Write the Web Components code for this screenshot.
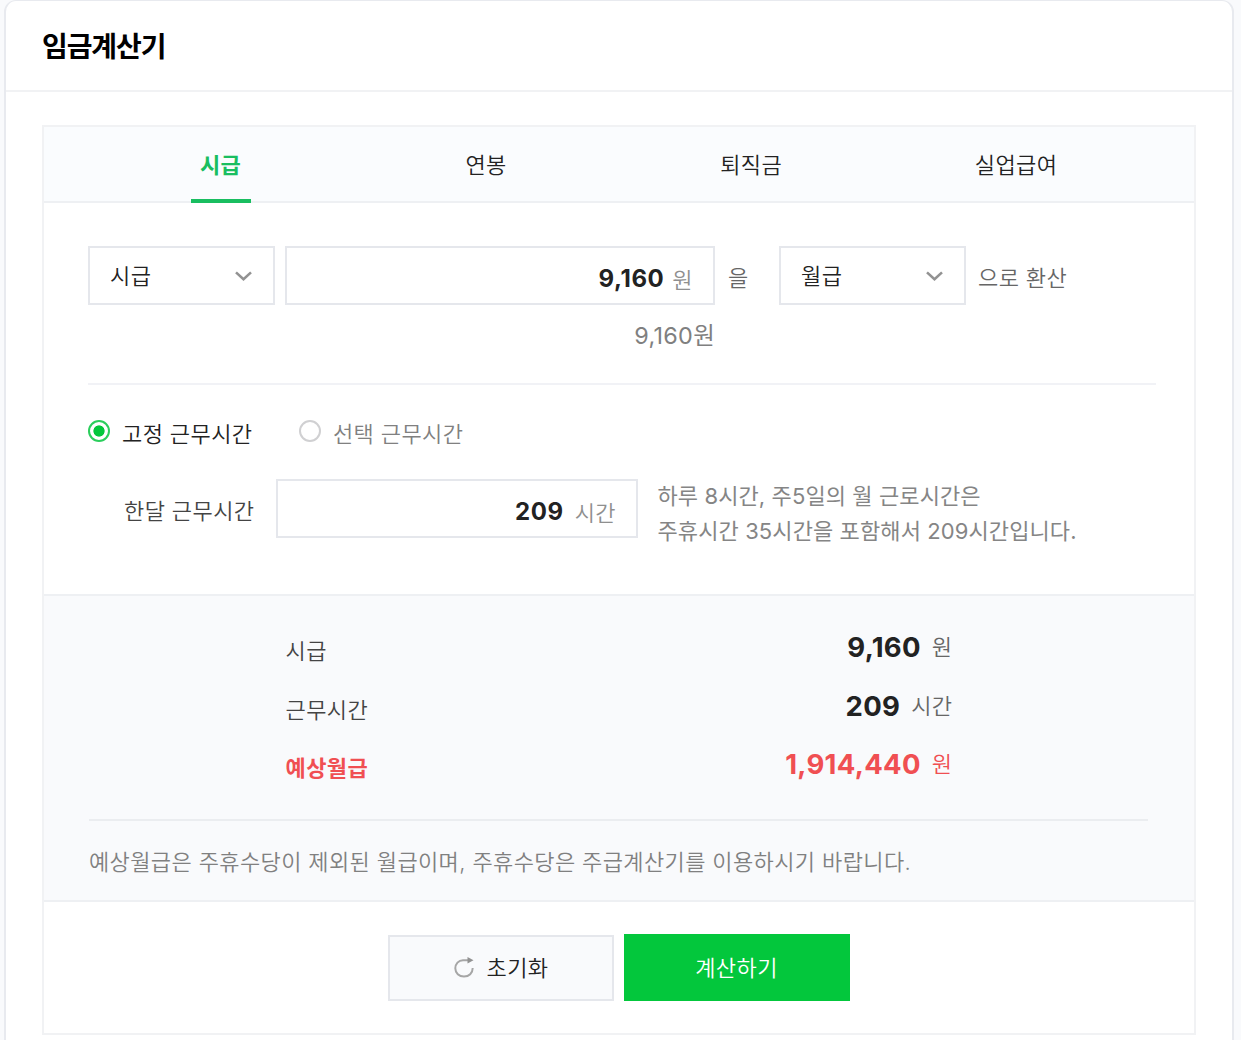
<!DOCTYPE html>
<html lang="ko">
<head>
<meta charset="UTF-8">
<title>임금계산기</title>
<style>
    body{
        margin: 0;
        height: 1040px;
        overflow: hidden;
        background-color: #f9fafc;
        font-family: Inter, "Noto Sans CJK KR", sans-serif;
        font-size: 22px;
        font-weight: 350;
        line-height: 34px;
        letter-spacing: 0.4px;
        color: #222;
    }
</style>
</head>
<body>
<wage-card>
    <span slot="title">임금계산기</span>
    <wage-tabs>
        <wage-tab active>시급</wage-tab>
        <wage-tab>연봉</wage-tab>
        <wage-tab>퇴직금</wage-tab>
        <wage-tab>실업급여</wage-tab>
    </wage-tabs>
    <wage-form></wage-form>
    <wage-result>
        <wage-row value="9,160" unit="원">시급</wage-row>
        <wage-row value="209" unit="시간">근무시간</wage-row>
        <wage-row value="1,914,440" unit="원" total>예상월급</wage-row>
        <span slot="note">예상월급은 주휴수당이 제외된 월급이며, 주휴수당은 주급계산기를 이용하시기 바랍니다.</span>
    </wage-result>
    <wage-actions>
        <wage-button reset>초기화</wage-button>
        <wage-button>계산하기</wage-button>
    </wage-actions>
</wage-card>

<script>
/** Base común: crea el shadow-DOM y renderiza el elemento. */
class WageElement extends HTMLElement{

    constructor(){
        super();
        this.attachShadow({mode: 'open'});
    }

    connectedCallback(){
        this.shadowRoot.innerHTML = `<style>:host, *{ box-sizing: border-box; }</style>` + this.render();
    }
}

/** Tarjeta principal con título. */
class WageCard extends WageElement{
    render(){
        return `
            <style>
                :host{
                    display: block;
                    width: 1230px;
                    height: 1060px;
                    margin-left: 4px;
                    border: 2px solid #e8eaef;
                    border-top-width: 1px;
                    border-radius: 12px 12px 0 0;
                    background-color: #fff;
                }
                h2{
                    margin: 0;
                    height: 91px;
                    padding: 26px 0 0 36px;
                    border-bottom: 2px solid #f1f2f4;
                    font-size: 28px;
                    font-weight: 700;
                    line-height: 40px;
                    letter-spacing: -1.1px;
                    color: #000;
                }
                .panel{
                    width: 1154px;
                    height: 910px;
                    margin: 33px 0 0 36px;
                    border: 2px solid #f1f2f4;
                }
            </style>
            <h2><slot name="title"></slot></h2>
            <div class="panel"><slot></slot></div>
        `;
    }
}

/** Barra de pestañas. */
class WageTabs extends WageElement{
    render(){
        return `
            <style>
                :host{
                    display: grid;
                    grid-template-columns: repeat(4, 265px);
                    height: 76px;
                    padding-left: 44.6px;
                    border-bottom: 2px solid #eef0f3;
                    background-color: #fafcfe;
                }
            </style>
            <slot></slot>
        `;
    }
}

class WageTab extends WageElement{
    render(){
        return `
            <style>
                :host{
                    display: flex;
                    justify-content: center;
                    height: 76px;
                }
                span{
                    padding: 21px 10px 0;
                }
                :host([active]) span{
                    width: 60px;
                    padding: 21px 9px 0;
                    border-bottom: 4px solid #19be60;
                    font-weight: 700;
                    letter-spacing: 0.2px;
                    white-space: nowrap;
                    color: #19be60;
                }
            </style>
            <span><slot></slot></span>
        `;
    }
}

/** Selector desplegable. */
class WageSelect extends WageElement{
    render(){
        return `
            <style>
                :host{
                    display: flex;
                    justify-content: space-between;
                    align-items: center;
                    width: 187px;
                    height: 59px;
                    padding: 0 21px 0 20px;
                    border: 2px solid #e5e7ec;
                    background-color: #fff;
                }
            </style>
            <slot></slot>
            <svg width="17" height="10" viewBox="0 0 17 10" fill="none" stroke="#929292" stroke-width="2.6">
                <path d="M1 1.4 8.5 8.2 16 1.4"/>
            </svg>
        `;
    }
}

/** Campo numérico con unidad. */
class WageInput extends WageElement{
    render(){
        return `
            <style>
                :host{
                    display: flex;
                    justify-content: flex-end;
                    height: 59px;
                    padding: 14px 20px 0 0;
                    border: 2px solid #e5e7ec;
                    background-color: #fff;
                }
                b{
                    font-size: 24px;
                    font-weight: 700;
                    letter-spacing: 0.6px;
                }
                span{
                    padding-top: 1px;
                    margin-left: var(--unit-gap, 8px);
                    color: #8f8f8f;
                }
            </style>
            <b>${this.getAttribute('value')}</b>
            <span>${this.getAttribute('unit')}</span>
        `;
    }
}

/** Botón de opción. */
class WageRadio extends WageElement{
    render(){
        return `
            <style>
                :host{
                    display: flex;
                    gap: 12px;
                    color: #808080;
                }
                :host([checked]){
                    color: #222;
                }
                i{
                    flex: none;
                    width: 22px;
                    height: 22px;
                    margin-top: 3px;
                    border: 2px solid #d0d0d2;
                    border-radius: 50%;
                }
                :host([checked]) i{
                    border-color: #2bce5c;
                    background: radial-gradient(circle, #03c73c 5.2px, #fff 6px);
                }
            </style>
            <i></i>
            <span><slot></slot></span>
        `;
    }
}

/** Formulario de conversión y horas de trabajo. */
class WageForm extends WageElement{
    render(){
        return `
            <style>
                :host{
                    display: block;
                    height: 391px;
                    padding: 43px 38px 0 44px;
                }
                .convert, .radios, .hours{
                    display: flex;
                }
                .convert span{
                    padding-top: 15px;
                    color: #666;
                }
                .amount{
                    width: 430px;
                    margin-left: 10px;
                }
                .obj{
                    width: 64px;
                    padding-left: 13px;
                }
                .to{
                    padding-left: 12px;
                }
                .echo{
                    width: 627px;
                    padding-top: 14px;
                    text-align: right;
                    font-size: 23.4px;
                    font-weight: 400;
                    letter-spacing: 0.3px;
                    color: #808080;
                }
                hr{
                    height: 2px;
                    margin: 30px 0 32px;
                    border: 0;
                    background-color: #f1f2f6;
                }
                .radios{
                    gap: 46.5px;
                }
                .hours{
                    margin-top: 28px;
                }
                .label{
                    width: 188px;
                    padding: 15px 0 0 36px;
                    color: #444;
                }
                .month{
                    --unit-gap: 11px;
                    width: 362px;
                }
                .help{
                    margin: 0 0 0 19.5px;
                    line-height: 35px;
                    font-weight: 400;
                    letter-spacing: 0.1px;
                    color: #858585;
                }
            </style>
            <div class="convert">
                <wage-select>시급</wage-select>
                <wage-input class="amount" value="9,160" unit="원"></wage-input>
                <span class="obj">을</span>
                <wage-select>월급</wage-select>
                <span class="to">으로 환산</span>
            </div>
            <div class="echo">9,160원</div>
            <hr>
            <div class="radios">
                <wage-radio checked>고정 근무시간</wage-radio>
                <wage-radio>선택 근무시간</wage-radio>
            </div>
            <div class="hours">
                <div class="label">한달 근무시간</div>
                <wage-input class="month" value="209" unit="시간"></wage-input>
                <p class="help">하루 8시간, 주5일의 월 근로시간은<br>주휴시간 35시간을 포함해서 209시간입니다.</p>
            </div>
        `;
    }
}

/** Resumen del resultado. */
class WageResult extends WageElement{
    render(){
        return `
            <style>
                :host{
                    display: block;
                    height: 308px;
                    padding: 25px 46px 0 45px;
                    border: solid #eef0f3;
                    border-width: 2px 0;
                    background-color: #f9fafc;
                }
                .rows{
                    width: 667px;
                    margin-left: 196.5px;
                }
                .note{
                    margin-top: 22px;
                    padding-top: 24px;
                    border-top: 2px solid #ebedf0;
                    white-space: nowrap;
                    letter-spacing: 0.38px;
                    color: #808080;
                }
            </style>
            <div class="rows"><slot></slot></div>
            <div class="note"><slot name="note"></slot></div>
        `;
    }
}

class WageRow extends WageElement{
    render(){
        return `
            <style>
                :host{
                    display: flex;
                    justify-content: space-between;
                    height: 58.5px;
                    color: #444;
                }
                .label{
                    padding-top: 13.4px;
                }
                .value{
                    display: flex;
                    padding-top: 9.4px;
                }
                b{
                    margin-right: 11px;
                    font-size: 27.5px;
                    font-weight: 700;
                    letter-spacing: 0.3px;
                    color: #222;
                }
                .unit{
                    color: #666;
                }
                :host([total]) *{
                    color: #f04f52;
                }
                :host([total]) .label{
                    font-weight: 700;
                }
            </style>
            <span class="label"><slot></slot></span>
            <span class="value"><b>${this.getAttribute('value')}</b><span class="unit">${this.getAttribute('unit')}</span></span>
        `;
    }
}

/** Zona de botones. */
class WageActions extends WageElement{
    render(){
        return `
            <style>
                :host{
                    display: flex;
                    justify-content: center;
                    gap: 10px;
                    padding: 32px 1px 0 0;
                }
            </style>
            <slot></slot>
        `;
    }
}

class WageButton extends WageElement{
    render(){
        const icon = `
            <svg width="20" height="22" viewBox="0 0 20 22" fill="none">
                <path d="M14 3.2H9C4.5 3.2 1.3 6.8 1.3 11.3C1.3 16 5 19.6 10 19.6S18.7 16 18.7 11" stroke="#a6a6a6" stroke-width="2"/>
                <path d="M13.5 0 19.5 3.2 13.5 6.4Z" fill="#929292"/>
            </svg>
        `;
        return `
            <style>
                :host{
                    display: flex;
                    justify-content: center;
                    align-items: center;
                    gap: 13px;
                    width: 226px;
                    height: 67px;
                    background-color: #03c73c;
                    color: #fff;
                }
                :host([reset]){
                    height: 66px;
                    margin-top: 1px;
                    padding-left: 1px;
                    border: 2px solid #e5e7ec;
                    background-color: #f9fafc;
                    color: #222;
                }
            </style>
            ${this.hasAttribute('reset') ? icon : ''}
            <slot></slot>
        `;
    }
}

customElements.define('wage-card', WageCard);
customElements.define('wage-tabs', WageTabs);
customElements.define('wage-tab', WageTab);
customElements.define('wage-select', WageSelect);
customElements.define('wage-input', WageInput);
customElements.define('wage-radio', WageRadio);
customElements.define('wage-form', WageForm);
customElements.define('wage-result', WageResult);
customElements.define('wage-row', WageRow);
customElements.define('wage-actions', WageActions);
customElements.define('wage-button', WageButton);
</script>
</body>
</html>
